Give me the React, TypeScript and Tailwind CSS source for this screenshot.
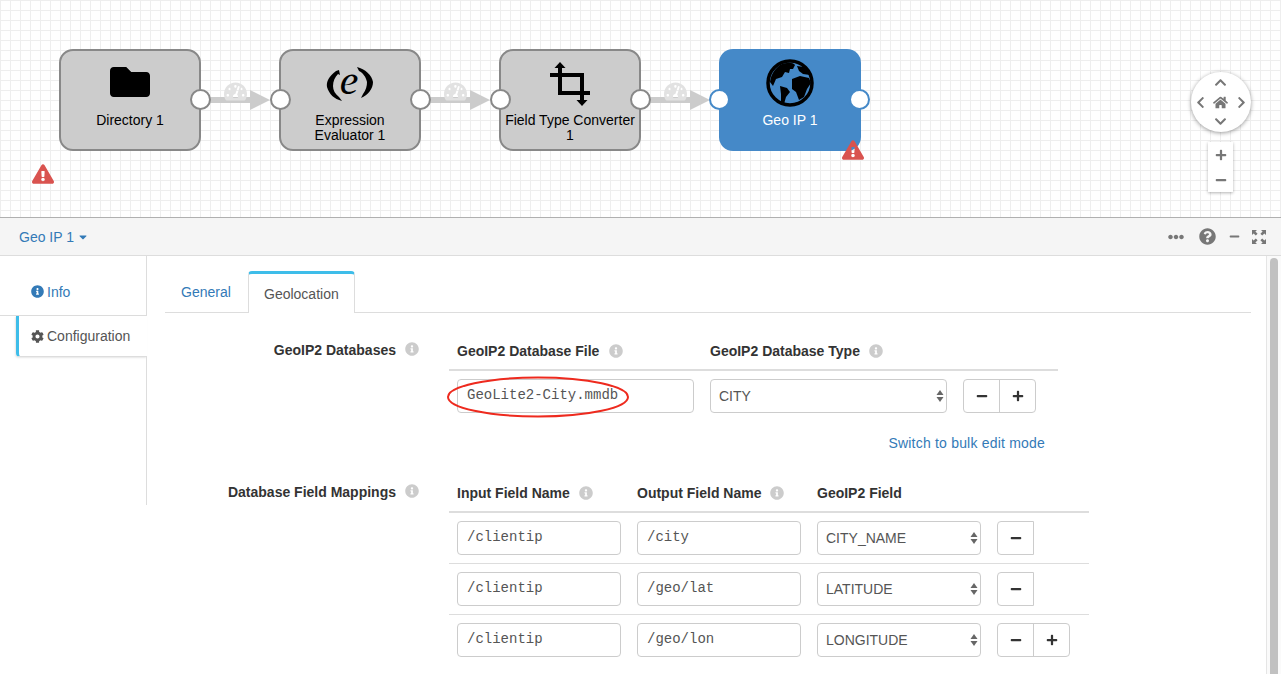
import { FaCaretDown, FaCog, FaEllipsisH, FaExclamationTriangle, FaFolder, FaHome, FaInfoCircle, FaMinus, FaPlus, FaQuestionCircle, FaChevronUp, FaChevronDown, FaChevronLeft, FaChevronRight, FaTachometerAlt } from 'react-icons/fa'

function ExpressionIcon() {
  return (
    <svg width="50" height="48" viewBox="0 0 50 48" className="block -my-[2px]">
      <path d="M11 13 C4 18 1 24 2 29 C4 36 9 41 17 43 L14 39 C10 36 8 32 8 28 C8 23 10 19 13 16 L15 17 L14 12 Z" fill="#000" />
      <path d="M32 9 C40 11 47 17 48 24 C48 31 43 37 36 40 L38 36 C41 32 42 28 42 24 C41 19 38 15 34 13 Z" fill="#000" />
      <text x="24" y="36" textAnchor="middle" fontFamily="'Liberation Serif', serif" fontStyle="italic" fontSize="42" fill="#000">e</text>
    </svg>
  )
}

function CropIcon() {
  return (
    <svg width="40" height="44" viewBox="0 0 40 44" className="block mt-[4px]">
      <path d="M0 13 H32 V40 M10 6 V31 H40" fill="none" stroke="#000" strokeWidth="4" />
      <path d="M10 0 L15.5 6 H4.5 Z" fill="#000" />
      <path d="M32 44 L26.5 38 H37.5 Z" fill="#000" />
    </svg>
  )
}

function GlobeIcon() {
  return (
    <svg width="48" height="48" viewBox="0 0 48 48" className="block" fill="#000">
      <circle cx="24" cy="24" r="22" fill="none" stroke="#000" strokeWidth="3.5" />
      <path d="M14 6 C20 3 27 3 29 6 L27 10 L24 10 L23 14 L19 13 L16 18 L10 20 L7 27 L4 23 C5 15 9 10 14 6 Z" />
      <path d="M31 7 L38 8 L44 16 L37 15 L33 12 Z" />
      <path d="M26 20 L34 17 L43 19 L45 24 L41 30 L38 38 L33 41 L30 33 L26 30 Z" />
      <path d="M14 27 L21 29 L24 33 L20 38 L18 45 L15 43 L15 35 Z" />
    </svg>
  )
}

function ExpandIcon() {
  return (
    <svg width="14" height="14" viewBox="0 0 14 14" className="block" fill="#777">
      <path d="M0 0 H5 L3.4 1.6 L5.6 3.8 L3.8 5.6 L1.6 3.4 L0 5 Z" />
      <path d="M14 0 V5 L12.4 3.4 L10.2 5.6 L8.4 3.8 L10.6 1.6 L9 0 Z" />
      <path d="M0 14 V9 L1.6 10.6 L3.8 8.4 L5.6 10.2 L3.4 12.4 L5 14 Z" />
      <path d="M14 14 H9 L10.6 12.4 L8.4 10.2 L10.2 8.4 L12.4 10.6 L14 9 Z" />
    </svg>
  )
}

function Node({ left, label, selected, children }: { left: string; label: React.ReactNode; selected?: boolean; children: React.ReactNode }) {
  return (
    <div className={`absolute top-[49px] ${left} w-[142px] h-[102px] rounded-[14px] flex flex-col items-center ${selected ? 'bg-[#4589c8] text-white' : 'bg-[#cccccc] border-2 border-[#888888] text-black'}`}>
      <div className={`flex items-center justify-center h-[44px] ${selected ? 'mt-[12px]' : 'mt-[9px]'}`}>{children}</div>
      <div className={`text-center text-sm leading-[15px] ${selected ? 'mt-[8px]' : 'mt-[9px]'}`}>{label}</div>
    </div>
  )
}

function Edge({ left }: { left: string }) {
  return (
    <div className={`absolute top-[80px] ${left} w-[62px] h-[32px]`}>
      <div className="absolute left-0 top-[17px] w-[42px] h-[6px] bg-[#cccccc]" />
      <svg width="20" height="20" viewBox="0 0 20 20" className="absolute left-[40px] top-[10px]">
        <path d="M0 0 L20 10 L0 20 Z" fill="#cccccc" />
      </svg>
      <FaTachometerAlt className="absolute left-[14px] top-0 text-[#e2e2e2]" size={23} />
    </div>
  )
}

function Port({ left, selected }: { left: string; selected?: boolean }) {
  return <div className={`absolute top-[89px] ${left} w-[21px] h-[21px] rounded-full bg-white border-2 ${selected ? 'border-[#4589c8]' : 'border-[#888888]'}`} />
}

function Info() {
  return <FaInfoCircle className="text-[#cccccc] shrink-0" size={14} />
}

function Field({ value, className }: { value: string; className: string }) {
  return (
    <input
      readOnly
      value={value}
      className={`${className} h-[34px] px-[9px] pb-[2px] border border-[#cccccc] rounded text-sm text-[#555555] bg-white outline-none font-['Liberation_Mono',monospace]`}
    />
  )
}

function Select({ value, className }: { value: string; className: string }) {
  return (
    <div className={`relative h-[34px] ${className}`}>
      <select
        value={value}
        onChange={() => {}}
        className="appearance-none w-full h-full pl-[8px] border border-[#cccccc] rounded text-sm text-[#555555] bg-white outline-none"
      >
        <option>{value}</option>
      </select>
      <svg width="8" height="14" viewBox="0 0 8 14" className="absolute right-[3px] top-[10px]" fill="#666666">
        <path d="M4 1 L7.5 6 H0.5 Z" />
        <path d="M4 13 L0.5 8 H7.5 Z" />
      </svg>
    </div>
  )
}

function RowButtons({ width, plus, squared }: { width: string; plus?: boolean; squared?: boolean }) {
  return (
    <div className={`flex h-[34px] ${width} border border-[#cccccc] bg-white text-[#333333] ${squared ? 'rounded-l' : 'rounded'}`}>
      <div className="flex-1 flex items-center justify-center">
        <FaMinus size={12} />
      </div>
      {plus && (
        <div className="flex-1 flex items-center justify-center border-l border-[#cccccc]">
          <FaPlus size={12} />
        </div>
      )}
    </div>
  )
}

export default function App() {
  return (
    <div className="w-[1281px] h-[674px] overflow-hidden flex flex-col bg-white font-['Liberation_Sans',sans-serif] text-sm text-[#333333]">
      {/* pipeline canvas */}
      <div className="relative h-[218px] shrink-0 border-b border-[#b0b0b0] bg-white bg-[linear-gradient(#eeeeee_1px,transparent_1px),linear-gradient(90deg,#eeeeee_1px,transparent_1px)] bg-[size:10px_10px] overflow-hidden">
        <Node left="left-[59px]" label="Directory 1">
          <FaFolder size={40} />
        </Node>
        <Node left="left-[279px]" label={<>Expression<br />Evaluator 1</>}>
          <ExpressionIcon />
        </Node>
        <Node left="left-[499px]" label={<>Field Type Converter<br />1</>}>
          <CropIcon />
        </Node>
        <Node left="left-[719px]" label="Geo IP 1" selected>
          <GlobeIcon />
        </Node>

        <Edge left="left-[210px]" />
        <Edge left="left-[430px]" />
        <Edge left="left-[650px]" />

        <Port left="left-[190px]" />
        <Port left="left-[270px]" />
        <Port left="left-[410px]" />
        <Port left="left-[490px]" />
        <Port left="left-[630px]" />
        <Port left="left-[709px]" selected />
        <Port left="left-[849px]" selected />

        <FaExclamationTriangle className="absolute left-[32px] top-[163px] text-[#d9534f]" size={22} />
        <FaExclamationTriangle className="absolute left-[842px] top-[139px] text-[#d9534f]" size={22} />

        {/* pan control */}
        <div className="absolute left-[1191px] top-[72px] w-[60px] h-[60px] rounded-full bg-white shadow-[0_1px_4px_rgba(0,0,0,0.4)] text-[#777777]">
          <FaChevronUp className="absolute left-[23px] top-[4px]" size={13} />
          <FaHome className="absolute left-[22px] top-[23px]" size={15} />
          <FaChevronLeft className="absolute left-[3px] top-[24px]" size={13} />
          <FaChevronRight className="absolute right-[3px] top-[24px]" size={13} />
          <FaChevronDown className="absolute left-[23px] top-[43px]" size={13} />
        </div>
        <div className="absolute left-[1208px] top-[142px] w-[25px] h-[50px] bg-white shadow-[0_1px_3px_rgba(0,0,0,0.3)] text-[#777777] flex flex-col items-center justify-around">
          <FaPlus size={12} />
          <FaMinus size={12} />
        </div>
      </div>

      {/* detail pane header */}
      <div className="h-[38px] shrink-0 bg-[#f5f5f5] border-b border-[#dddddd] flex items-center pl-[19px] pr-[15px]">
        <span className="text-[#337ab7]">Geo IP 1</span>
        <FaCaretDown className="text-[#337ab7] ml-[3px]" size={12} />
        <div className="ml-auto flex items-center text-[#777777]">
          <FaEllipsisH size={16} />
          <FaQuestionCircle className="ml-[15px]" size={17} />
          <FaMinus className="ml-[13px]" size={11} />
          <div className="ml-[12px]">
            <ExpandIcon />
          </div>
        </div>
      </div>

      <div className="flex-1 flex min-h-0">
        {/* side tabs */}
        <div className="w-[147px] shrink-0 h-[249px] flex flex-col">
          <div className="h-[60px] border-r border-b border-[#dddddd] flex items-center pl-[31px] pt-[12px] text-[#337ab7]">
            <FaInfoCircle className="mr-[3px]" size={13} />
            Info
          </div>
          <div className="h-[41px] ml-[16px] border-l-[3px] border-b border-[#dddddd] border-l-[#3ebde9] rounded-bl flex items-center pl-[12px] text-[#555555] shadow-[-1px_1px_2px_rgba(0,0,0,0.1)]">
            <FaCog className="mr-[3px]" size={13} />
            Configuration
          </div>
          <div className="flex-1 border-r border-[#dddddd]" />
        </div>

        {/* main content */}
        <div className="w-[1119px] shrink-0 pl-[18px] pr-[15px] pt-[15px]">
          <div className="flex h-[42px] border-b border-[#dddddd] pl-0">
            <div className="w-[83px] flex items-center pl-[16px] text-[#337ab7]">General</div>
            <div className="w-[107px] h-[42px] bg-white border-t-[3px] border-x border-t-[#3ebde9] border-x-[#dddddd] rounded-t flex items-center pl-[15px] text-[#555555]">
              Geolocation
            </div>
          </div>

          {/* GeoIP2 databases */}
          <div className="flex mt-[20px]">
            <div className="w-[284px] shrink-0 flex justify-end items-start gap-[9px] pr-[30px] pt-[7px] font-bold">
              GeoIP2 Databases
              <div className="pt-[2px]"><Info /></div>
            </div>
            <div className="w-[609px]">
              <div className="grid grid-cols-[253px_253px_103px] border-b-2 border-[#dddddd] font-bold pt-[8px] pb-[8px]">
                <div className="flex items-center gap-[10px] pl-[8px]">GeoIP2 Database File <Info /></div>
                <div className="flex items-center gap-[9px] pl-[8px]">GeoIP2 Database Type <Info /></div>
                <div />
              </div>
              <div className="grid grid-cols-[253px_253px_103px] py-[8px]">
                <div className="pl-[8px]"><Field value="GeoLite2-City.mmdb" className="w-[237px]" /></div>
                <div className="pl-[8px]"><Select value="CITY" className="w-[237px]" /></div>
                <div className="pl-[8px]"><RowButtons width="w-[73px]" plus /></div>
              </div>
              <div className="pt-[12px] pr-[13px] text-right leading-[20px] tracking-[0.2px] text-[#337ab7]">Switch to bulk edit mode</div>
            </div>
          </div>

          {/* field mappings */}
          <div className="flex mt-[22px]">
            <div className="w-[284px] shrink-0 flex justify-end items-start gap-[9px] pr-[30px] pt-[7px] font-bold">
              Database Field Mappings
              <div className="pt-[2px]"><Info /></div>
            </div>
            <div className="w-[640px]">
              <div className="grid grid-cols-[180px_180px_180px_100px] border-b-2 border-[#dddddd] font-bold pt-[8px] pb-[8px]">
                <div className="flex items-center gap-[9px] pl-[8px]">Input Field Name <Info /></div>
                <div className="flex items-center gap-[9px] pl-[8px]">Output Field Name <Info /></div>
                <div className="pl-[8px]">GeoIP2 Field</div>
                <div />
              </div>
              <div className="grid grid-cols-[180px_180px_180px_100px] py-[8px] border-b border-[#dddddd]">
                <div className="pl-[8px]"><Field value="/clientip" className="w-[164px]" /></div>
                <div className="pl-[8px]"><Field value="/city" className="w-[164px]" /></div>
                <div className="pl-[8px]"><Select value="CITY_NAME" className="w-[164px]" /></div>
                <div className="pl-[8px]"><RowButtons width="w-[37px]" squared /></div>
              </div>
              <div className="grid grid-cols-[180px_180px_180px_100px] py-[8px] border-b border-[#dddddd]">
                <div className="pl-[8px]"><Field value="/clientip" className="w-[164px]" /></div>
                <div className="pl-[8px]"><Field value="/geo/lat" className="w-[164px]" /></div>
                <div className="pl-[8px]"><Select value="LATITUDE" className="w-[164px]" /></div>
                <div className="pl-[8px]"><RowButtons width="w-[37px]" squared /></div>
              </div>
              <div className="grid grid-cols-[180px_180px_180px_100px] py-[8px]">
                <div className="pl-[8px]"><Field value="/clientip" className="w-[164px]" /></div>
                <div className="pl-[8px]"><Field value="/geo/lon" className="w-[164px]" /></div>
                <div className="pl-[8px]"><Select value="LONGITUDE" className="w-[164px]" /></div>
                <div className="pl-[8px]"><RowButtons width="w-[73px]" plus /></div>
              </div>
            </div>
          </div>
        </div>

        {/* scrollbar */}
        <div className="w-[15px] shrink-0 border-l border-[#e5e5e5] bg-[#fafafa] pl-[3px] pt-[2px]">
          <div className="w-[8px] h-[500px] rounded-full bg-[#c1c1c1]" />
        </div>
      </div>

      {/* red annotation round the file name */}
      <svg width="190" height="48" viewBox="0 0 190 48" className="absolute left-[443px] top-[373px] pointer-events-none">
        <ellipse cx="95" cy="24" rx="90" ry="19.5" fill="none" stroke="#ee2a1e" strokeWidth="2" />
      </svg>
    </div>
  )
}
